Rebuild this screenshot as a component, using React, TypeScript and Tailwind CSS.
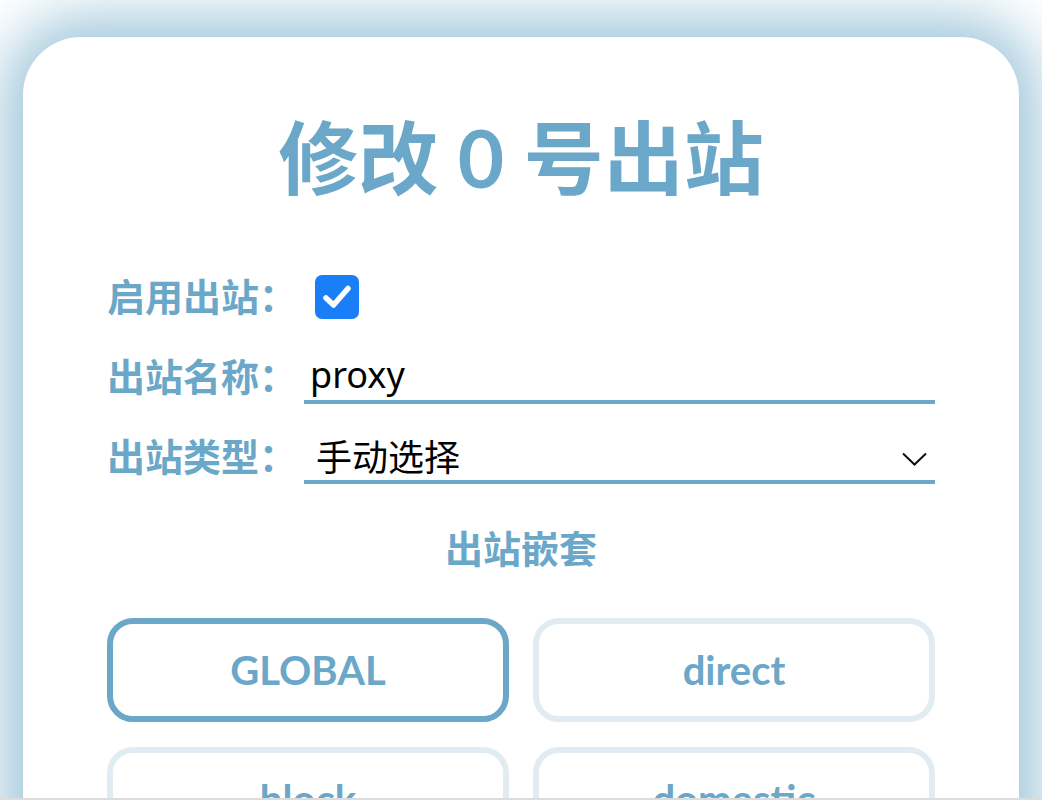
const PRIMARY = "text-[#6ba7c8]";

const OutboundEdit = () => {
  const nested = [
    { id: "GLOBAL", active: true },
    { id: "direct", active: false },
    { id: "block", active: false },
    { id: "domestic", active: false },
  ];

  return (
    <div
      className="h-[800px] overflow-hidden bg-white border-b-2 border-[#dcdcdc]"
      style={{ fontFamily: "Lato, 'Noto Sans CJK SC', sans-serif" }}
    >
      <div className="mx-[23px] mt-[37px] rounded-[58px] bg-white shadow-[0_0_60px_20px_#9fc6da] px-[84px] pt-[72px] pb-10">
        {/* Title */}
        <h1 className={`text-center text-[80px] leading-[96px] font-bold ${PRIMARY}`}>
          修改 0 号出站
        </h1>

        {/* Form */}
        <div className="mt-[64px] flex flex-col gap-[25px]">
          <div className="flex items-center h-[55px]">
            <span className={`w-[197px] text-[38px] font-bold ${PRIMARY}`}>启用出站：</span>
            <div className="ml-[11px] w-[44px] h-[44px] rounded-[7px] bg-[#1a7ff6] flex items-center justify-center">
              <svg width="30" height="26" viewBox="0 0 30 26" fill="none">
                <path
                  d="M4 14 L11.5 21 L26 4.5"
                  stroke="white"
                  strokeWidth="5.5"
                  strokeLinecap="round"
                  strokeLinejoin="round"
                />
              </svg>
            </div>
          </div>

          <div className="flex items-center h-[55px]">
            <span className={`w-[197px] text-[38px] font-bold ${PRIMARY}`}>出站名称：</span>
            <div className="flex-1 h-[55px] border-b-4 border-[#6ba7c8] flex items-center pl-[6px]">
              <span className="text-[36px] text-black" style={{ fontFamily: "'Noto Sans', 'Noto Sans CJK SC', sans-serif" }}>
                proxy
              </span>
            </div>
          </div>

          <div className="flex items-center h-[55px]">
            <span className={`w-[197px] text-[38px] font-bold ${PRIMARY}`}>出站类型：</span>
            <div className="flex-1 h-[55px] border-b-4 border-[#6ba7c8] flex items-center justify-between pl-[12px] pr-[8px]">
              <span className="text-[36px] text-black" style={{ fontFamily: "'Noto Sans CJK SC', sans-serif" }}>
                手动选择
              </span>
              <svg width="25" height="14" viewBox="0 0 25 14" fill="none" className="mt-[8px]">
                <path d="M1 1.5 L12.5 12.5 L24 1.5" stroke="#111" strokeWidth="2" />
              </svg>
            </div>
          </div>
        </div>

        {/* Nested outbounds */}
        <h2 className={`mt-[40px] text-center text-[38px] leading-[48px] font-bold ${PRIMARY}`}>
          出站嵌套
        </h2>

        <div className="mt-[46px] grid grid-cols-2 gap-x-[24px] gap-y-[25px]">
          {nested.map((item) => (
            <button
              key={item.id}
              className={`h-[104px] rounded-[26px] border-[6px] bg-white text-[40px] font-bold ${PRIMARY} ${
                item.active ? "border-[#6ba7c8]" : "border-[#e1ecf2]"
              }`}
            >
              {item.id}
            </button>
          ))}
        </div>
      </div>
    </div>
  );
};

export default OutboundEdit;
